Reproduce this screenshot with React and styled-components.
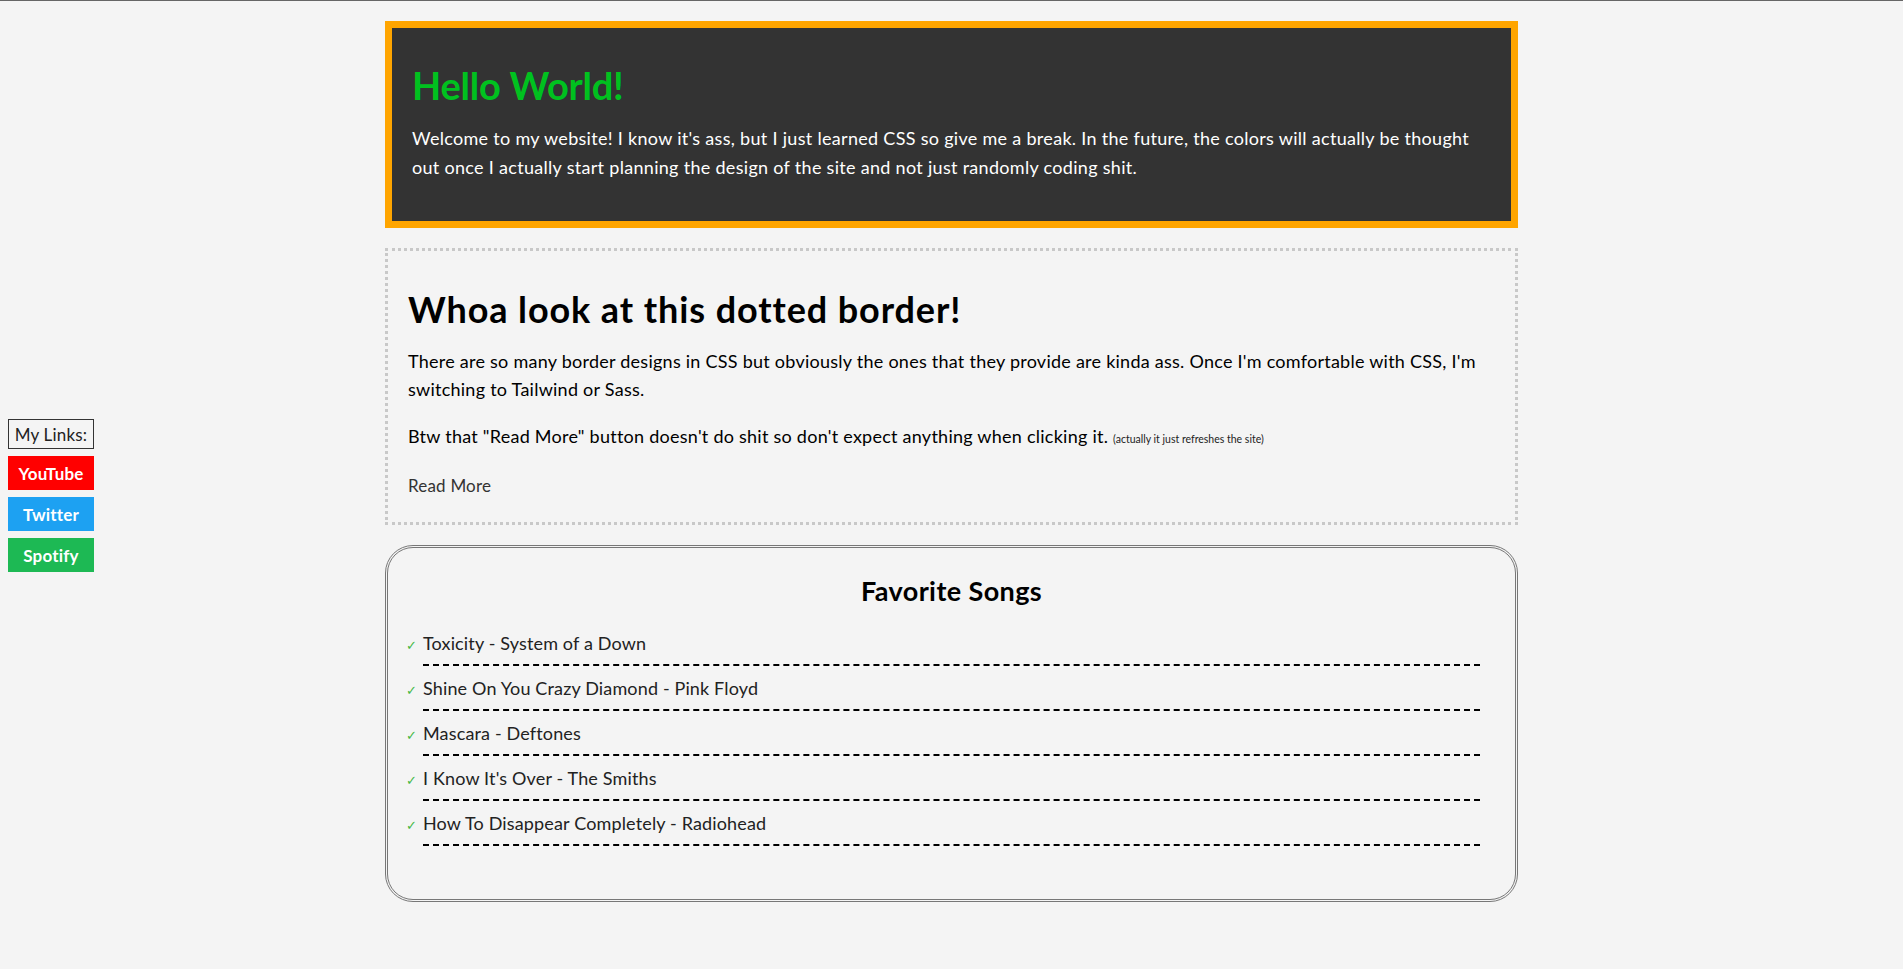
import React from "react";
import styled, { createGlobalStyle } from "styled-components";

const songs = [
  "Toxicity - System of a Down",
  "Shine On You Crazy Diamond - Pink Floyd",
  "Mascara - Deftones",
  "I Know It's Over - The Smiths",
  "How To Disappear Completely - Radiohead",
];

const links = [
  { name: "YouTube", color: "#ff0000" },
  { name: "Twitter", color: "#1da1f2" },
  { name: "Spotify", color: "#1db954" },
];

export default function App() {
  return (
    <>
      <GlobalStyle />
      <Page>
        <Sidebar>
          <LinksLabel>My Links:</LinksLabel>
          {links.map((link) => (
            <LinkButton key={link.name} href="#" $bg={link.color}>
              {link.name}
            </LinkButton>
          ))}
        </Sidebar>

        <Main>
          <Intro>
            <IntroTitle>Hello World!</IntroTitle>
            <IntroText>
              Welcome to my website! I know it's ass, but I just learned CSS so
              give me a break. In the future, the colors will actually be
              thought out once I actually start planning the design of the site
              and not just randomly coding shit.
            </IntroText>
          </Intro>

          <DottedCard>
            <CardTitle>Whoa look at this dotted border!</CardTitle>
            <CardText>
              There are so many border designs in CSS but obviously the ones
              that they provide are kinda ass. Once I'm comfortable with CSS,
              I'm switching to Tailwind or Sass.
            </CardText>
            <CardText $gap="19px">
              Btw that "Read More" button doesn't do shit so don't expect
              anything when clicking it.{" "}
              <Aside>(actually it just refreshes the site)</Aside>
            </CardText>
            <ReadMore type="button">Read More</ReadMore>
          </DottedCard>

          <SongsCard>
            <SongsTitle>Favorite Songs</SongsTitle>
            <SongList>
              {songs.map((song) => (
                <SongItem key={song}>
                  <Check>✓</Check>
                  <SongName>{song}</SongName>
                </SongItem>
              ))}
            </SongList>
          </SongsCard>
        </Main>

        <div />
      </Page>
    </>
  );
}

const GlobalStyle = createGlobalStyle`
  html {
    border-top: 1px solid #666;
    background: #f4f4f4;
  }

  body {
    margin: 0;
    background: #f4f4f4;
    font-family: Lato, "Liberation Sans", sans-serif;
    color: #000;
  }
`;

const Page = styled.div`
  display: grid;
  grid-template-columns: 1fr 1133px 1fr;
  padding: 20px 8px 28px;
`;

const Sidebar = styled.nav`
  justify-self: start;
  align-self: start;
  display: flex;
  flex-direction: column;
  gap: 7px;
  width: 86px;
  margin-top: 398px;
`;

const LinksLabel = styled.div`
  height: 30px;
  box-sizing: border-box;
  border: 1px solid #333;
  display: flex;
  align-items: center;
  justify-content: center;
  color: #222;
  font: 400 17px/1 Lato, "Liberation Sans", sans-serif;
  letter-spacing: 0.2px;
`;

const LinkButton = styled.a`
  height: 34px;
  display: flex;
  align-items: center;
  justify-content: center;
  background: ${(p) => p.$bg};
  color: #fff;
  text-decoration: none;
  font: 700 17px/1 Lato, "Liberation Sans", sans-serif;
  letter-spacing: 0.2px;
`;

const Main = styled.main`
  display: flex;
  flex-direction: column;
  gap: 20px;
`;

const Intro = styled.section`
  background: #333;
  border: 7px solid #ffa500;
  padding: 20px 24px 21px 20px;
`;

const IntroTitle = styled.h1`
  margin: 15px 0 17px;
  color: #00c11f;
  font: 700 38px/44px Lato, "Liberation Sans", sans-serif;
  letter-spacing: -0.2px;
`;

const IntroText = styled.p`
  margin: 0 0 18px;
  color: #fff;
  font: 400 18px/28.8px Lato, "Liberation Sans", sans-serif;
  letter-spacing: 0.3px;
`;

const DottedCard = styled.section`
  border: 3px dotted #c8c8c8;
  padding: 20px 20px 24px;
`;

const CardTitle = styled.h2`
  margin: 18px 0 0;
  font: 700 36px/40px Lato, "Liberation Sans", sans-serif;
  letter-spacing: 0.9px;
`;

const CardText = styled.p`
  margin: ${(p) => p.$gap || "18px"} 0 0;
  font: 400 18px/28px Lato, "Liberation Sans", sans-serif;
  letter-spacing: 0.25px;
`;

const Aside = styled.small`
  font-size: 10.5px;
  letter-spacing: 0;
  color: #222;
`;

const ReadMore = styled.button`
  display: block;
  margin-top: 21px;
  padding: 0;
  border: none;
  background: none;
  color: #333;
  cursor: pointer;
  font: 400 17px/24px Lato, "Liberation Sans", sans-serif;
  letter-spacing: 0.2px;
`;

const SongsCard = styled.section`
  border: 3px double #777;
  border-radius: 28px;
  padding: 27px 35px 53px 18px;
`;

const SongsTitle = styled.h2`
  margin: 0 0 22px 17px;
  text-align: center;
  font: 700 27px/32px Lato, "Liberation Sans", sans-serif;
  letter-spacing: 0.4px;
`;

const SongList = styled.ul`
  list-style: none;
  margin: 0;
  padding: 0;
  display: flex;
  flex-direction: column;
  gap: 8px;
`;

const SongItem = styled.li`
  display: flex;
  align-items: baseline;
`;

const Check = styled.span`
  width: 17px;
  flex: none;
  color: #45b845;
  font: 400 13px/1 "DejaVu Sans", sans-serif;
`;

const SongName = styled.span`
  flex: 1;
  padding-bottom: 7px;
  border-bottom: 2px dashed #000;
  color: #222;
  font: 400 18px/28px Lato, "Liberation Sans", sans-serif;
  letter-spacing: 0.15px;
`;
